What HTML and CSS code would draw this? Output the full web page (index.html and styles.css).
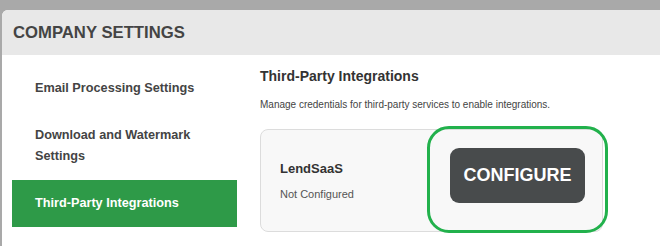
FILE: index.html
```html
<!DOCTYPE html>
<html lang="en">
<head>
    <meta charset="UTF-8">
    <meta name="viewport" content="width=device-width, initial-scale=1.0">
    <title>Company Settings</title>
    <link rel="stylesheet" href="styles.css">
</head>
<body>
    <div class="panel">
        <header class="panel-header">
            <h1>COMPANY SETTINGS</h1>
        </header>

        <div class="panel-body">
            <nav class="sidebar">
                <a href="#email">Email Processing Settings</a>
                <a href="#download">Download and Watermark Settings</a>
                <a href="#integrations" class="active">Third-Party Integrations</a>
            </nav>

            <div class="content">
                <h2>Third-Party Integrations</h2>
                <p class="desc">Manage credentials for third-party services to enable integrations.</p>

                <div class="card">
                    <div class="card-info">
                        <h3>LendSaaS</h3>
                        <p class="status">Not Configured</p>
                    </div>
                    <button type="button" class="btn-configure">CONFIGURE</button>
                    <!-- highlight ring drawn over the card -->
                    <span class="highlight"></span>
                </div>
            </div>
        </div>
    </div>
</body>
</html>
```

FILE: styles.css
```css
  body {
      font-family: 'Liberation Sans', Arial, sans-serif;
      background-color: #a9a9a9;
      margin: 0;
      padding: 10px 0 0 2px;
      height: 246px;
      box-sizing: border-box;
      overflow: hidden;
  }
  .panel {
      background-color: white;
      border-radius: 6px 0 0 0;
      overflow: hidden;
      height: 100%;
  }
  .panel-header {
      background-color: #e8e8e8;
      height: 45px;
      display: flex;
      align-items: center;
      padding-left: 11px;
  }
  .panel-header h1 {
      margin: 0;
      font-size: 16.7px;
      color: #444;
  }
  .panel-body {
      display: flex;
  }
  .sidebar {
      width: 225px;
      padding: 10px 0 0 10px;
      display: flex;
      flex-direction: column;
  }
  .sidebar a {
      display: block;
      padding: 13px 20px 13px 23px;
      line-height: 21px;
      font-size: 12.7px;
      font-weight: bold;
      color: #444;
      text-decoration: none;
  }
  .sidebar a.active {
      background-color: #2e9a48;
      color: white;
  }
  .content {
      padding: 12px 0 0 23px;
      width: 343px;
  }
  .content h2 {
      margin: 0;
      font-size: 14px;
      line-height: 18px;
      color: #333;
  }
  .desc {
      margin: 14px 0 0;
      font-size: 10px;
      line-height: 12px;
      color: #444;
  }
  .card {
      position: relative;
      display: flex;
      justify-content: space-between;
      align-items: flex-start;
      margin-top: 18px;
      height: 103px;
      box-sizing: border-box;
      padding: 18px 17px 0 19px;
      background-color: #f8f8f8;
      border: 1px solid #dcdcdc;
      border-radius: 8px;
  }
  .card-info h3 {
      margin: 13px 0 0;
      font-size: 13px;
      line-height: 16px;
      color: #333;
  }
  .status {
      margin: 11px 0 0;
      font-size: 11px;
      line-height: 13px;
      color: #555;
  }
  .btn-configure {
      width: 135px;
      height: 55px;
      background-color: #484b4c;
      color: white;
      border: none;
      border-radius: 9px;
      font-family: inherit;
      font-size: 18px;
      font-weight: bold;
      cursor: pointer;
  }
  .highlight {
      position: absolute;
      left: 166px;
      top: -4px;
      width: 181px;
      height: 107px;
      box-sizing: border-box;
      border: 3px solid #22b14c;
      border-radius: 22px;
      pointer-events: none;
  }
```
